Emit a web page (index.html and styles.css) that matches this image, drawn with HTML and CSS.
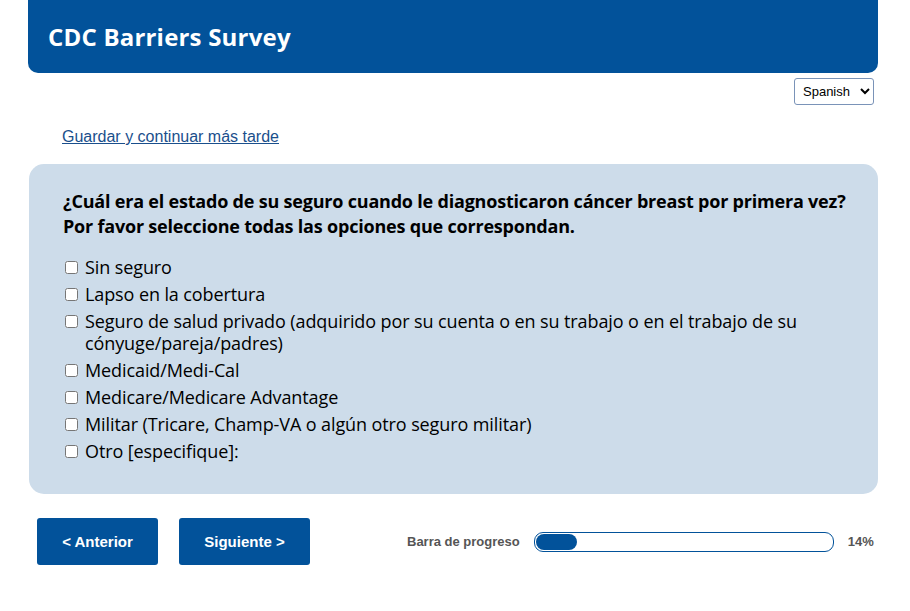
FILE: index.html
```html
<!DOCTYPE html>
<html lang="es">
<head>
  <meta charset="utf-8">
  <title>CDC Barriers Survey</title>
  <link rel="stylesheet" href="styles.css">
</head>
<body>
  <div class="page">
    <!-- Header -->
    <header class="banner">
      <h1>CDC Barriers Survey</h1>
    </header>

    <div class="lang-row">
      <select class="lang-select">
        <option>Spanish</option>
        <option>English</option>
      </select>
    </div>

    <a class="save-link" href="#">Guardar y continuar más tarde</a>

    <!-- Question -->
    <div class="question-card">
      <p class="question-text">¿Cuál era el estado de su seguro cuando le diagnosticaron cáncer breast por primera vez? Por favor seleccione todas las opciones que correspondan.</p>
      <ul class="options">
        <li><label><input type="checkbox"><span>Sin seguro</span></label></li>
        <li><label><input type="checkbox"><span>Lapso en la cobertura</span></label></li>
        <li><label><input type="checkbox"><span>Seguro de salud privado (adquirido por su cuenta o en su trabajo o en el trabajo de su cónyuge/pareja/padres)</span></label></li>
        <li><label><input type="checkbox"><span>Medicaid/Medi-Cal</span></label></li>
        <li><label><input type="checkbox"><span>Medicare/Medicare Advantage</span></label></li>
        <li><label><input type="checkbox"><span>Militar (Tricare, Champ-VA o algún otro seguro militar)</span></label></li>
        <li><label><input type="checkbox"><span>Otro [especifique]:</span></label></li>
      </ul>
    </div>

    <!-- Navigation -->
    <div class="nav-row">
      <button class="nav-btn btn-prev">&lt; Anterior</button>
      <button class="nav-btn btn-next">Siguiente &gt;</button>
      <div class="progress">
        <span class="progress-label">Barra de progreso</span>
        <div class="progress-track"><div class="progress-fill"></div></div>
        <span class="progress-value">14%</span>
      </div>
    </div>
  </div>
</body>
</html>
```

FILE: styles.css
```css
body { margin: 0; background: #fff; font-family: "Open Sans", "Noto Sans", sans-serif; color: #000; }
.page { width: 850px; margin-left: 28px; }

.banner { height: 73px; background: #02529a; border-radius: 0 0 10px 10px; display: flex; align-items: center; padding-left: 20px; box-sizing: border-box; }
.banner h1 { margin: 0; color: #fff; font-size: 24px; font-weight: 700; letter-spacing: 0.2px; }

.lang-row { display: flex; justify-content: flex-end; padding-right: 4px; margin-top: 5px; }
.lang-select { height: 27px; width: 80px; font-family: "Liberation Sans", Arial, sans-serif; font-size: 13px; color: #000; background: #fff; border: 1px solid #7a93b8; border-radius: 3px; padding: 0 4px; }

.save-link { display: inline-block; margin: 23px 0 0 34px; font-family: "Liberation Sans", Arial, sans-serif; font-size: 16px; color: #1a4f8c; }

.question-card { margin: 17px 0 0 1px; background: #cddcea; border-radius: 15px; padding: 25px 30px 27px 34px; }
.question-text { margin: 0; font-size: 18px; line-height: 25px; font-weight: 700; letter-spacing: -0.2px; }
.options { list-style: none; margin: 17px 0 0; padding: 0; }
.options li { margin-bottom: 5px; }
.options label { display: flex; align-items: flex-start; font-size: 18px; line-height: 22px; letter-spacing: -0.1px; }
.options input { width: 13px; height: 13px; margin: 5px 7px 0 2px; flex: none; }

.nav-row { display: flex; align-items: center; margin: 24px 0 0 9px; gap: 21px; }
.nav-btn { height: 47px; border: none; border-radius: 3px; background: #02529a; color: #fff; font-family: "Liberation Sans", Arial, sans-serif; font-size: 15px; font-weight: 700; cursor: pointer; }
.btn-prev { width: 121px; }
.btn-next { width: 131px; }

.progress { display: flex; align-items: center; margin-left: 76px; gap: 14px; font-family: "Liberation Sans", Arial, sans-serif; font-size: 13px; font-weight: 700; color: #555; }
.progress-track { width: 296px; height: 16px; border: 1px solid #02529a; border-radius: 9px; padding: 1px; background: #fff; }
.progress-fill { width: 14%; height: 100%; background: #02529a; border-radius: 8px; }
```
